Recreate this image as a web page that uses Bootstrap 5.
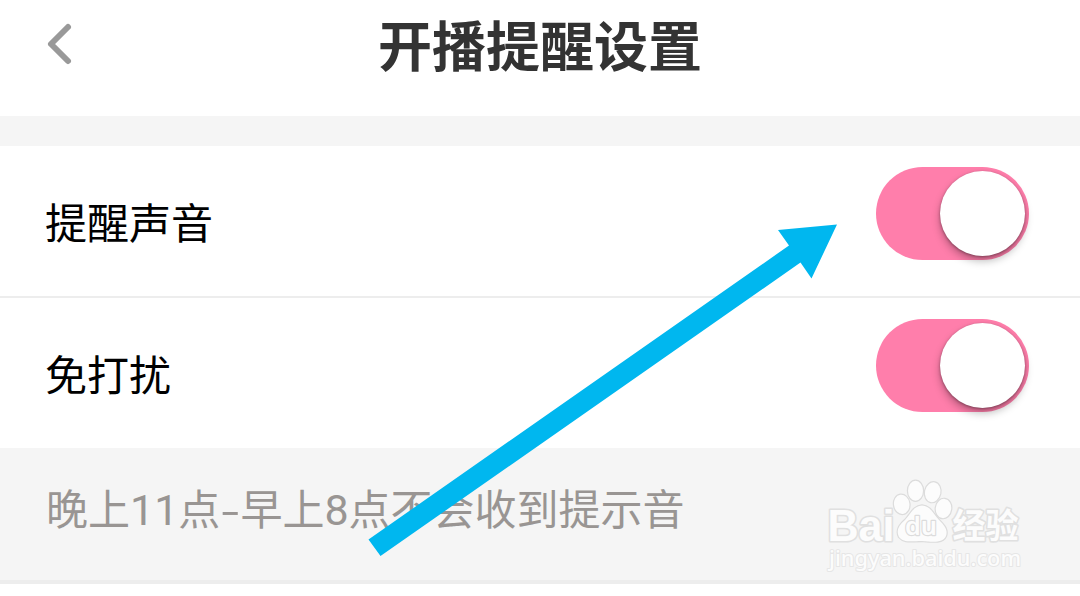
<!DOCTYPE html>
<html lang="zh-CN">
<head>
  <meta charset="UTF-8" />
  <meta name="viewport" content="width=device-width, initial-scale=1" />
  <title>开播提醒设置</title>
  <link href="https://cdn.jsdelivr.net/npm/bootstrap@5.3.0/dist/css/bootstrap.min.css" rel="stylesheet" />
  <style>
    body { font-family: "Noto Sans CJK SC", sans-serif; background: #fff; color: #000; overflow: hidden; }
    .page { width: 1080px; height: 596px; }
    .top-bar { height: 116px; padding: 0 46px; }
    .top-side { width: 60px; height: 88px; }
    .top-title { font-size: 54px; font-weight: 700; line-height: 88px; color: #333; }
    .band { height: 30px; background: #f5f5f5; }
    .setting { height: 150px; padding: 21px 51px 0 45px; font-size: 42px; line-height: 107px; }
    .setting + .setting { height: 152px; border-top: 2px solid #ededed; }
    .toggle { width: 153px; height: 93px; padding: 4px; border-radius: 47px; background: #ff7eab; }
    .toggle-knob { width: 85px; height: 85px; border-radius: 50%; background: #fff; box-shadow: 0 5px 9px rgba(0, 0, 0, .28), 0 1px 3px rgba(0, 0, 0, .35); }
    .note { height: 136px; padding-left: 46px; background: #f5f5f5; border-bottom: 4px solid #ededed; font-size: 42px; line-height: 118px; color: #999593; }
    .digit { font-family: Roboto, sans-serif; font-size: 43px; line-height: 1; }
    .dash { display: inline-block; width: 20px; text-align: center; }
    .dash i { display: inline-block; font-style: normal; transform: scaleX(1.4); }
    .overlay { position: absolute; left: 0; top: 0; pointer-events: none; }
    .logo-edge { stroke: #e0e0e0; stroke-width: 3.2; }
  </style>
</head>
<body>
  <div class="page position-relative">
    <!-- Title bar -->
    <header class="top-bar d-flex justify-content-between align-items-start">
      <a href="#" class="top-side d-flex align-items-center" aria-label="返回">
        <svg width="28" height="44" viewBox="0 0 28 44" fill="none" stroke="#999" stroke-width="6" stroke-linecap="round" stroke-linejoin="round">
          <path d="M22 5L5 22L22 39" />
        </svg>
      </a>
      <h1 class="top-title m-0">开播提醒设置</h1>
      <div class="top-side"></div>
    </header>
    <div class="band"></div>

    <!-- Settings -->
    <div class="setting d-flex justify-content-between align-items-start">
      <span>提醒声音</span>
      <div class="toggle d-flex justify-content-end" role="switch" aria-checked="true" tabindex="0"><div class="toggle-knob"></div></div>
    </div>
    <div class="setting d-flex justify-content-between align-items-start">
      <span>免打扰</span>
      <div class="toggle d-flex justify-content-end" role="switch" aria-checked="true" tabindex="0"><div class="toggle-knob"></div></div>
    </div>
    <div class="note text-nowrap">晚上<span class="digit">11</span>点<span class="dash"><i>-</i></span>早上<span class="digit">8</span>点不会收到提示音</div>

    <!-- Watermark and pointer arrow -->
    <svg class="overlay" width="1080" height="596" viewBox="0 0 1080 596">
      <g fill="#fcfcfc" stroke-linejoin="round" paint-order="stroke">
        <!-- grey stroke behind the white fill gives the outline -->
        <text class="logo-edge" x="827.500" y="541" font-family="Liberation Sans" font-weight="700" font-size="44" textLength="67" lengthAdjust="spacingAndGlyphs">Bai</text>
        <g stroke="#dcdcdc" stroke-width="2.400">
          <ellipse cx="901.700" cy="504.300" rx="7.700" ry="9.700" transform="rotate(-8 901.7 504.3)" />
          <ellipse cx="915.500" cy="490.700" rx="7.500" ry="10" />
          <ellipse cx="932.700" cy="492.200" rx="7.700" ry="10" transform="rotate(12 932.7 492.2)" />
          <ellipse cx="943.500" cy="508.500" rx="7.700" ry="9.700" transform="rotate(8 943.5 508.5)" />
          <path d="M922 505.500C931 506 933 514 939 520C945 526 948 530 946 536C943 543 934 542 922 541C911 541 904 543 899 537C896 531 898 526 905 520C911 514 913 506 922 505.500Z" />
        </g>
        <text x="905" y="535" font-family="Noto Sans" font-weight="600" font-size="25" textLength="32" lengthAdjust="spacingAndGlyphs" stroke="#dcdcdc" stroke-width="2.400">du</text>
        <text class="logo-edge" x="952.500" y="538" font-family="Noto Sans CJK SC" font-weight="700" font-size="34" textLength="66" lengthAdjust="spacingAndGlyphs">经验</text>
        <text x="829" y="566" font-family="Noto Sans" font-weight="500" font-size="22" stroke="#e6e6e6" stroke-width="2" textLength="192" lengthAdjust="spacingAndGlyphs">jingyan.baidu.com</text>
      </g>
      <polygon fill="#00b7ef" points="837,224.500 778,230 789,245.500 368.500,539.500 380.500,556 800.500,262.500 811.500,278.500" />
    </svg>
  </div>

  <script src="https://cdn.jsdelivr.net/npm/bootstrap@5.3.0/dist/js/bootstrap.bundle.min.js"></script>
</body>
</html>
